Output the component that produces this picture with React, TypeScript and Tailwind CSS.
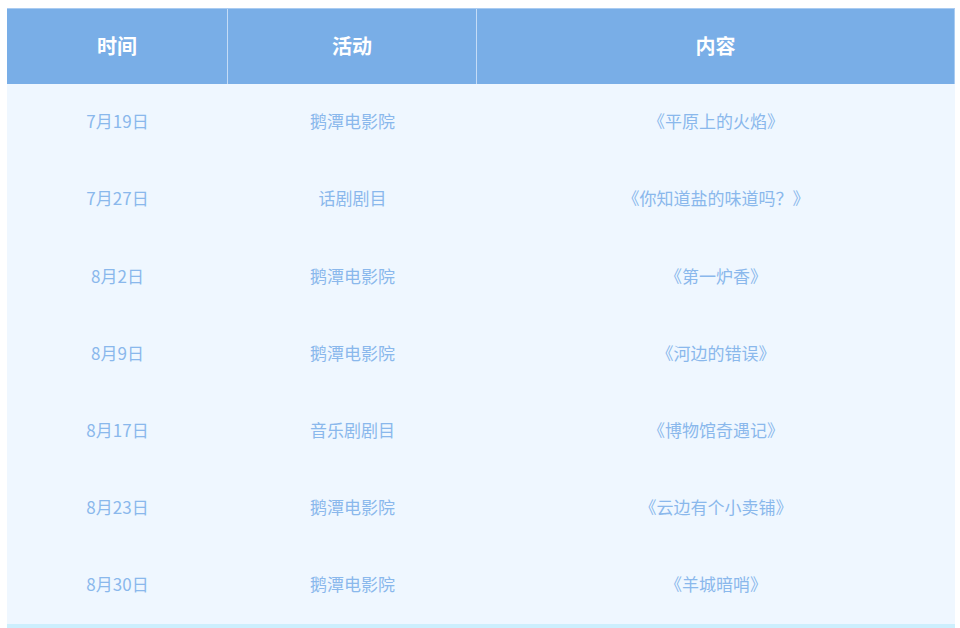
const rows = [
    { date: "7月19日", act: "鹅潭电影院", content: "《平原上的火焰》" },
    { date: "7月27日", act: "话剧剧目", content: "《你知道盐的味道吗？》" },
    { date: "8月2日", act: "鹅潭电影院", content: "《第一炉香》" },
    { date: "8月9日", act: "鹅潭电影院", content: "《河边的错误》" },
    { date: "8月17日", act: "音乐剧剧目", content: "《博物馆奇遇记》" },
    { date: "8月23日", act: "鹅潭电影院", content: "《云边有个小卖铺》" },
    { date: "8月30日", act: "鹅潭电影院", content: "《羊城暗哨》" },
];

const font = { fontFamily: '"Noto Sans CJK SC", "Noto Sans", sans-serif' };

export default function App() {
    return (
        <div className="bg-white w-[960px] h-[628px] pt-2 pl-[7px]" style={font}>
            <div className="w-[948px]">
                <div className="grid grid-cols-[221px_249px_1fr] h-[76px] bg-[#79aee7] border-t border-r border-[#a9cbf1] text-white text-[20px] font-bold">
                    <div className="flex items-center justify-center pb-[2px] border-r border-[#c5dcf6]">时间</div>
                    <div className="flex items-center justify-center pb-[2px] border-r border-[#c5dcf6]">活动</div>
                    <div className="flex items-center justify-center pb-[2px]">内容</div>
                </div>
                <div className="grid grid-rows-7 h-[544px] bg-[#eff7ff] border-b-4 border-[#cdeffd] text-[#8ab8ec] text-[17px]">
                    {rows.map((r) => (
                        <div key={r.date} className="grid grid-cols-[221px_249px_1fr] pb-[3px] items-center text-center">
                            <div>{r.date}</div>
                            <div>{r.act}</div>
                            <div>{r.content}</div>
                        </div>
                    ))}
                </div>
            </div>
        </div>
    );
}
